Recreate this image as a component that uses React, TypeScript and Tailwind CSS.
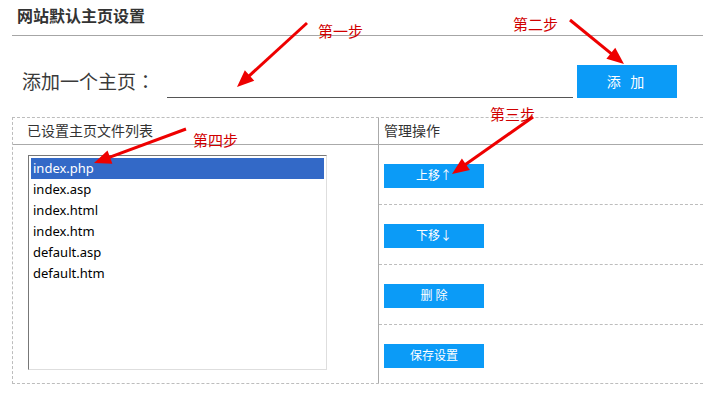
import React from "react";

type Arrow = { x1: number; y1: number; x2: number; y2: number };

const arrows: Arrow[] = [
  { x1: 307, y1: 23, x2: 237, y2: 87 },
  { x1: 570, y1: 20, x2: 624, y2: 64 },
  { x1: 533, y1: 117, x2: 452, y2: 174 },
  { x1: 186, y1: 129, x2: 94, y2: 163 },
];

const steps = [
  { text: "第一步", cls: "left-[318px] top-[21px]" },
  { text: "第二步", cls: "left-[513px] top-[14px]" },
  { text: "第三步", cls: "left-[490px] top-[104px]" },
  { text: "第四步", cls: "left-[193px] top-[130px]" },
];

const files = ["index.php", "index.asp", "index.html", "index.htm", "default.asp", "default.htm"];

const actions = ["上移↑", "下移↓", "删 除", "保存设置"];

function arrowHead(a: Arrow) {
  const dx = a.x2 - a.x1;
  const dy = a.y2 - a.y1;
  const len = Math.sqrt(dx * dx + dy * dy);
  const ux = dx / len;
  const uy = dy / len;
  const bx = a.x2 - ux * 17;
  const by = a.y2 - uy * 17;
  const w = 7;
  return `${a.x2},${a.y2} ${bx - uy * w},${by + ux * w} ${bx + uy * w},${by - ux * w}`;
}

export default function App() {
  return (
    <div className="relative w-[703px] h-[403px] overflow-hidden bg-white text-[#333] font-['Noto_Sans','Noto_Sans_CJK_SC',sans-serif]">
      {/* title */}
      <div className="ml-[12px] h-[36px] border-b border-[#a6a6a6] pl-[5px] pt-[6px] text-[16px] font-bold leading-[20px] text-[#333]">
        网站默认主页设置
      </div>

      {/* add row */}
      <div className="mt-[29px] flex h-[33px] items-center">
        <div className="w-[167px] pl-[22px] text-[19px] leading-[33px] text-[#3a3a3a]">
          添加一个主页<span className="font-['Noto_Sans_CJK_JP',sans-serif]">：</span>
        </div>
        <div className="h-[33px] w-[406px] border-b border-[#555]"></div>
        <button className="ml-[4px] h-[33px] w-[100px] bg-[#0b9bf7] text-[14px] tracking-[3px] text-white">
          添 加
        </button>
      </div>

      {/* settings table */}
      <div className="mt-[19px] ml-[12px] flex h-[267px] border border-r-0 border-dashed border-[#bdbdbd]">
        <div className="w-[366px] border-r border-[#aaa]">
          <div className="h-[27px] border-b border-[#aaa] pl-[14px] text-[14px] leading-[26px] text-[#333]">
            已设置主页文件列表
          </div>
          <div className="ml-[15px] mt-[10px] h-[215px] w-[299px] border-l border-t border-b border-r border-l-[#777] border-t-[#777] border-r-[#dedede] border-b-[#dedede] p-[2px]">
            {files.map((f, i) => (
              <div
                key={f}
                className={
                  i === 0
                    ? "h-[21px] bg-[#3369c7] pl-[2px] text-[13px] leading-[21px] text-white"
                    : "h-[21px] pl-[2px] text-[13px] leading-[21px] text-black"
                }
              >
                {f}
              </div>
            ))}
          </div>
        </div>

        <div className="flex-1">
          <div className="h-[27px] border-b border-[#aaa] pl-[5px] text-[14px] leading-[26px] text-[#333]">
            管理操作
          </div>
          {actions.map((a, i) => (
            <div
              key={a}
              className={
                i < 3
                  ? "h-[60px] border-b border-dashed border-[#bdbdbd] pl-[5px] pt-[17px]"
                  : "pl-[5px] pt-[17px]"
              }
            >
              <button className="h-[24px] w-[100px] bg-[#0b9bf7] text-[12px] leading-[24px] text-white">{a}</button>
            </div>
          ))}
        </div>
      </div>

      {/* annotations */}
      <svg className="pointer-events-none absolute left-0 top-0" width="703" height="403">
        {arrows.map((a, i) => (
          <g key={i}>
            <line x1={a.x1} y1={a.y1} x2={(a.x1 + a.x2) / 2 + (a.x2 - a.x1) * 0.4} y2={(a.y1 + a.y2) / 2 + (a.y2 - a.y1) * 0.4} stroke="#ee0000" strokeWidth={3} />
            <polygon points={arrowHead(a)} fill="#ee0000" />
          </g>
        ))}
      </svg>
      {steps.map((s) => (
        <div key={s.text} className={`absolute text-[15px] leading-[20px] text-[#d00000] ${s.cls}`}>
          {s.text}
        </div>
      ))}
    </div>
  );
}
